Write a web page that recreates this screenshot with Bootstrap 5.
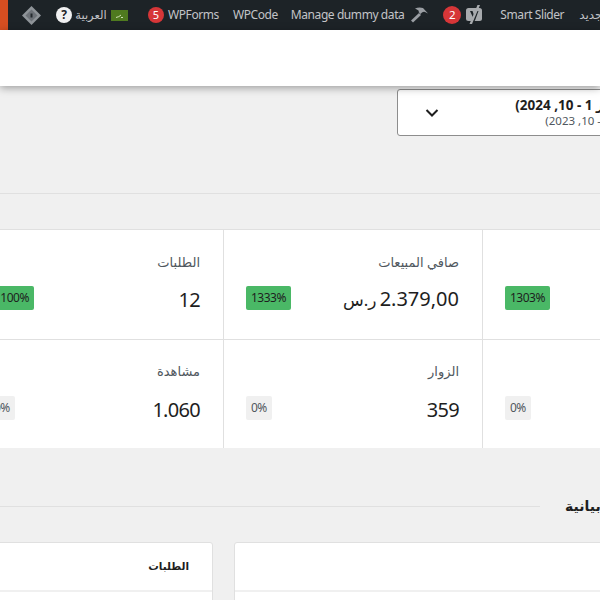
<!DOCTYPE html>
<html lang="ar">
<head>
<meta charset="utf-8">
<title>Analytics</title>
<link href="https://cdn.jsdelivr.net/npm/bootstrap@5.3.0/dist/css/bootstrap.min.css" rel="stylesheet">
<style>
html,body{margin:0;height:600px;width:600px;overflow:hidden;background:#f0f0f0}
body{font-family:"Noto Sans","DejaVu Sans",sans-serif;color:#1e1e1e;font-size:13px}
.shell{width:600px;height:600px;overflow:hidden}
.adminbar{height:30px;background:#1d2327;color:#c3c4c7;font-size:12px;letter-spacing:-.42px;white-space:nowrap}
.adminbar>*{flex:none}
.accent{width:8px;height:30px;background:#d54e21}
.bar-diamond{margin-left:14px;width:19px;height:19px}
.bar-help{margin-left:15px;width:16px;height:16px;border-radius:50%;background:#f0f0f1;color:#1d2327;font-size:12px;font-weight:700;line-height:16px;text-align:center}
.bar-lang{margin-left:3px;width:32px;font-size:11.5px;letter-spacing:0}
.bar-flag{margin-left:4px;width:17px;height:11px}
.bar-count{width:16px;height:16px;border-radius:50%;background:#d63638;color:#fff;font-size:11px;line-height:16px;text-align:center;letter-spacing:0}
.ms-20{margin-left:20px}
.ms-14{margin-left:14px}
.ms-13{margin-left:13px}
.ms-16{margin-left:16px}
.ms-4px{margin-left:4px}
.ms-5px{margin-left:5px}
.ms-6px{margin-left:6px}
.ms-15{margin-left:15px}
.wide-count{width:18px;height:18px;line-height:18px;font-size:11.5px}
.whiteband{height:56px;background:#fff;box-shadow:0 2px 8px rgba(0,0,0,.35);position:relative;z-index:2}
.datebox{margin-left:397px;margin-top:3px;width:420px;height:47px;background:#fff;border:1px solid #8d8d8d;border-radius:3px}
.datechev{margin-left:26px;width:16px;height:16px;flex:none}
.datetext{margin-left:auto;margin-right:180px;line-height:15px;text-align:right;direction:rtl;white-space:nowrap}
.datelabel{font-size:13.5px;font-weight:700;color:#1e1e1e}
.datesub{font-size:11.5px;color:#50575e;margin-right:35px}
.hr-rule{height:1px;background:#e0e0e0;margin-top:57px}
.statgrid{margin-top:35px;margin-left:-34px;width:1000px;display:grid;grid-template-columns:257px 259px 259px;background:#fff;border-top:1px solid #e0e0e0}
.statcell{height:110px;padding:24px 23px 0 22px;direction:rtl;border-left:1px solid #e0e0e0;border-bottom:1px solid #e0e0e0}
.statcell.lower{height:108px;padding-top:23px;border-bottom:0}
.statname{font-size:13px;line-height:16px;color:#50575e}
.statnum{font-size:20px;line-height:26px;padding-top:4px;letter-spacing:-.7px;color:#1e1e1e;white-space:nowrap}
.statmoney{letter-spacing:-.9px;word-spacing:-2px}
.statcur{font-size:17px;letter-spacing:0;font-weight:400}
.statline{margin-top:16px;height:25px}
.statcell:not(.lower) .statname{margin-bottom:-1px}
.chip{font-size:12px;line-height:16px;padding:4px 5px;border-radius:2px;background:#f0f0f0;color:#50575e;letter-spacing:-.5px}
.chip.up{background:#4ab866;color:#1e1e1e}
.sectionhead{height:94px;padding-top:48px;align-items:flex-start}
.sectionline{width:540px;height:1px;background:#e0e0e0;margin-top:10px;flex:none}
.sectiontitle{margin-left:25px;font-size:14px;font-weight:700;line-height:20px;direction:rtl;white-space:nowrap;color:#1e1e1e}
.chartrow{gap:21px;margin-left:-200px;width:1200px}
.chartcard{background:#fff;border:1px solid #e0e0e0;border-radius:3px 3px 0 0;height:100px;flex:none}
.chart-a{width:413px}
.chart-b{width:500px}
.charthead{height:49px;border-bottom:2px solid #f0f0f0;padding:13px 23px 0;direction:rtl;font-family:"DejaVu Sans",sans-serif;font-size:10.5px;letter-spacing:-.7px;font-weight:700;line-height:20px}
</style>
</head>
<body>
<div class="shell">
  <div class="adminbar d-flex align-items-center">
    <div class="accent"></div>
    <svg class="bar-diamond" viewBox="0 0 19 19"><path d="M9.5 0 19 9.5 9.5 19 0 9.5Z" fill="#8f9499"/><path d="M9.5 3.5 15.5 9.5 9.5 15.5 3.5 9.5Z" fill="#6d7278"/><rect x="8.5" y="7.5" width="2" height="4" fill="#23282d"/></svg>
    <div class="bar-help">?</div>
    <div class="bar-lang text-center">العربية</div>
    <svg class="bar-flag" viewBox="0 0 17 11"><rect width="17" height="11" fill="#4f7a1f"/><path d="M5 7.5q3-.5 5-2.5M10 7.5h2" stroke="#cfe0b5" stroke-width="1" fill="none"/></svg>
    <div class="bar-count ms-20">5</div>
    <div class="ms-4px">WPForms</div>
    <div class="ms-14">WPCode</div>
    <div class="ms-13">Manage dummy data</div>
    <svg class="ms-6px" width="18" height="18" viewBox="0 0 18 18"><path d="M9 7 11 9 3 16.500 1 14.500Z" fill="#9a9ea3"/><path d="M5 2.500Q9 .8 13 2L18 7.500 15 6Q13.500 5.500 12 6.500L10.500 8 8.500 6 9 5Q7.500 3.500 5 2.500Z" fill="#9a9ea3"/></svg>
    <div class="bar-count wide-count ms-15">2</div>
    <svg class="ms-5px" width="18" height="20" viewBox="0 0 18 20"><rect x="0" y="3" width="16" height="13" rx="2.500" fill="#a7aaad"/><path d="M4 6h2.500l1.800 5 1.800-5h2.400L9.200 15q-.6 1.700-2.700 1.500v-1.600q1 .1 1.200-.8Z" fill="#1d2327"/><path d="M11.500 0 14 0 6 19 3.500 19Z" fill="#a7aaad"/></svg>
    <div class="ms-16">Smart Slider</div>
    <div class="ms-15">جديد</div>
  </div>
  <div class="whiteband"></div>
  <div class="datebox d-flex align-items-center">
    <svg class="datechev" viewBox="0 0 16 16"><path d="M2.500 5 8 10.500 13.500 5" fill="none" stroke="#1e1e1e" stroke-width="2"/></svg>
    <div class="datetext">
      <div class="datelabel">أكتوبر 1 - 10, 2024)</div>
      <div class="datesub">- 10, 2023)</div>
    </div>
  </div>
  <div class="hr-rule"></div>
  <div class="statgrid">
    <div class="statcell">
      <div class="statname">الطلبات</div>
      <div class="statline d-flex justify-content-between align-items-center"><span class="statnum">12</span><span class="chip up">1100%</span></div>
    </div>
    <div class="statcell">
      <div class="statname">صافي المبيعات</div>
      <div class="statline d-flex justify-content-between align-items-center"><span class="statnum statmoney">2.379,00 <span class="statcur">ر.س</span></span><span class="chip up">1333%</span></div>
    </div>
    <div class="statcell">
      <div class="statname">&nbsp;</div>
      <div class="statline d-flex justify-content-end align-items-center"><span class="chip up">1303%</span></div>
    </div>
    <div class="statcell lower">
      <div class="statname">مشاهدة</div>
      <div class="statline d-flex justify-content-between align-items-center"><span class="statnum">1.060</span><span class="chip">0%</span></div>
    </div>
    <div class="statcell lower">
      <div class="statname">الزوار</div>
      <div class="statline d-flex justify-content-between align-items-center"><span class="statnum">359</span><span class="chip">0%</span></div>
    </div>
    <div class="statcell lower">
      <div class="statname">&nbsp;</div>
      <div class="statline d-flex justify-content-end align-items-center"><span class="chip">0%</span></div>
    </div>
  </div>
  <div class="sectionhead d-flex">
    <div class="sectionline"></div>
    <div class="sectiontitle">بيانية</div>
  </div>
  <div class="chartrow d-flex">
    <div class="chartcard chart-a"><div class="charthead">الطلبات</div></div>
    <div class="chartcard chart-b"><div class="charthead"></div></div>
  </div>
</div>
<script src="https://cdn.jsdelivr.net/npm/bootstrap@5.3.0/dist/js/bootstrap.bundle.min.js"></script>
</body>
</html>
